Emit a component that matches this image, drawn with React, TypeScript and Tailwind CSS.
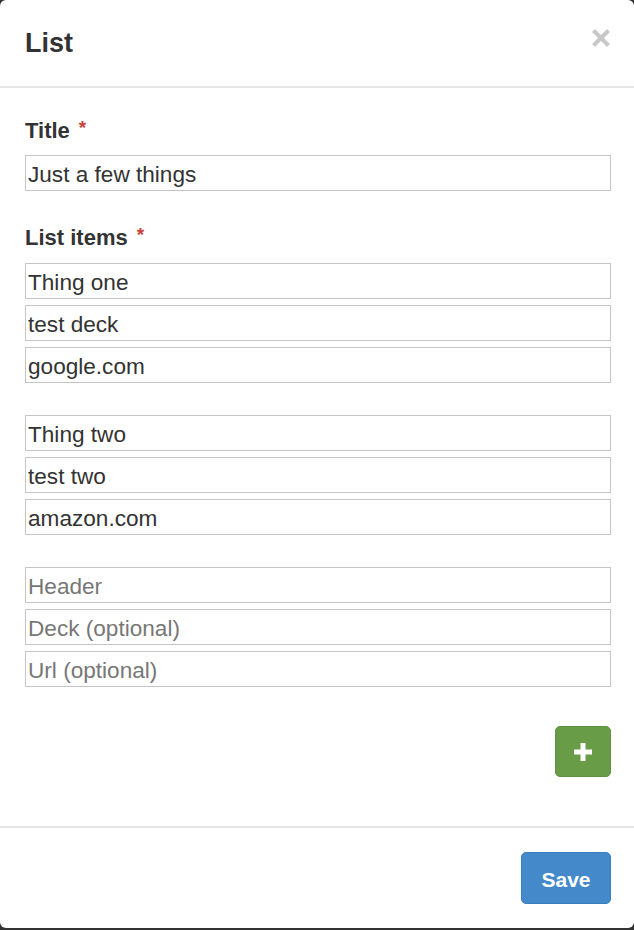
import React from 'react';

const groups = [
  ['Thing one', 'test deck', 'google.com'],
  ['Thing two', 'test two', 'amazon.com'],
];

const empty = ['Header', 'Deck (optional)', 'Url (optional)'];

function Field({ value, placeholder }: { value?: string; placeholder?: string }) {
  return (
    <input
      type="text"
      readOnly
      value={value ?? ''}
      placeholder={placeholder}
      className="block w-full h-[36px] border border-[#c4c4c4] bg-white pl-[2px] pr-[4px] pt-[3px] text-[22.6px] text-[#333] placeholder:text-[#777] outline-none"
    />
  );
}

function Label({ children }: { children: React.ReactNode }) {
  return (
    <label className="flex items-start text-[22px] leading-[26px] font-bold text-[#333]">
      {children}
      <span className="ml-[9px] text-[19px] leading-[19px] text-[#c9403a]">*</span>
    </label>
  );
}

export default function App() {
  return (
    <div className="min-h-[930px] bg-[#333] font-['Liberation_Sans',Arial,sans-serif]">
      <div className="flex h-[928px] w-full flex-col rounded-[6px] bg-white">
        {/* header */}
        <div className="flex h-[88px] items-center justify-between border-b-2 border-[#e5e5e5] pl-[25px] pr-[24px]">
          <h4 className="text-[27px] leading-[36px] font-bold text-[#333]">List</h4>
          <button className="-mt-[10px]" aria-label="Close">
            <svg width="18" height="18" viewBox="0 0 18 18">
              <line x1="1.5" y1="1.5" x2="16.5" y2="16.5" stroke="#c8c8c8" strokeWidth="4" />
              <line x1="16.5" y1="1.5" x2="1.5" y2="16.5" stroke="#c8c8c8" strokeWidth="4" />
            </svg>
          </button>
        </div>

        {/* body */}
        <div className="flex-1 pl-[25px] pr-[23px] pt-[30px]">
          <Label>Title</Label>
          <div className="mt-[11px]">
            <Field value="Just a few things" />
          </div>

          <div className="mt-[34px]">
            <Label>List items</Label>
          </div>
          <div className="mt-[12px] space-y-[32px]">
            {groups.map((g, i) => (
              <div key={i} className="space-y-[6px]">
                {g.map((v) => (
                  <Field key={v} value={v} />
                ))}
              </div>
            ))}
            <div className="space-y-[6px]">
              {empty.map((p) => (
                <Field key={p} placeholder={p} />
              ))}
            </div>
          </div>

          <div className="mt-[39px] flex justify-end">
            <button className="flex h-[51px] w-[56px] items-center justify-center rounded-[5px] border border-[#5f9140] bg-[#699c47]">
              <svg width="18" height="18" viewBox="0 0 18 18">
                <rect x="6.5" y="0" width="5" height="18" fill="white" />
                <rect x="0" y="6.5" width="18" height="5" fill="white" />
              </svg>
            </button>
          </div>
        </div>

        {/* footer */}
        <div className="flex justify-end border-t-2 border-[#e5e5e5] pr-[23px] pt-[24px] pb-[24px]">
          <button className="h-[52px] w-[90px] rounded-[5px] border border-[#3a7fbd] bg-[#448acb] pt-[3px] text-[21px] font-bold text-white">
            Save
          </button>
        </div>
      </div>
    </div>
  );
}
